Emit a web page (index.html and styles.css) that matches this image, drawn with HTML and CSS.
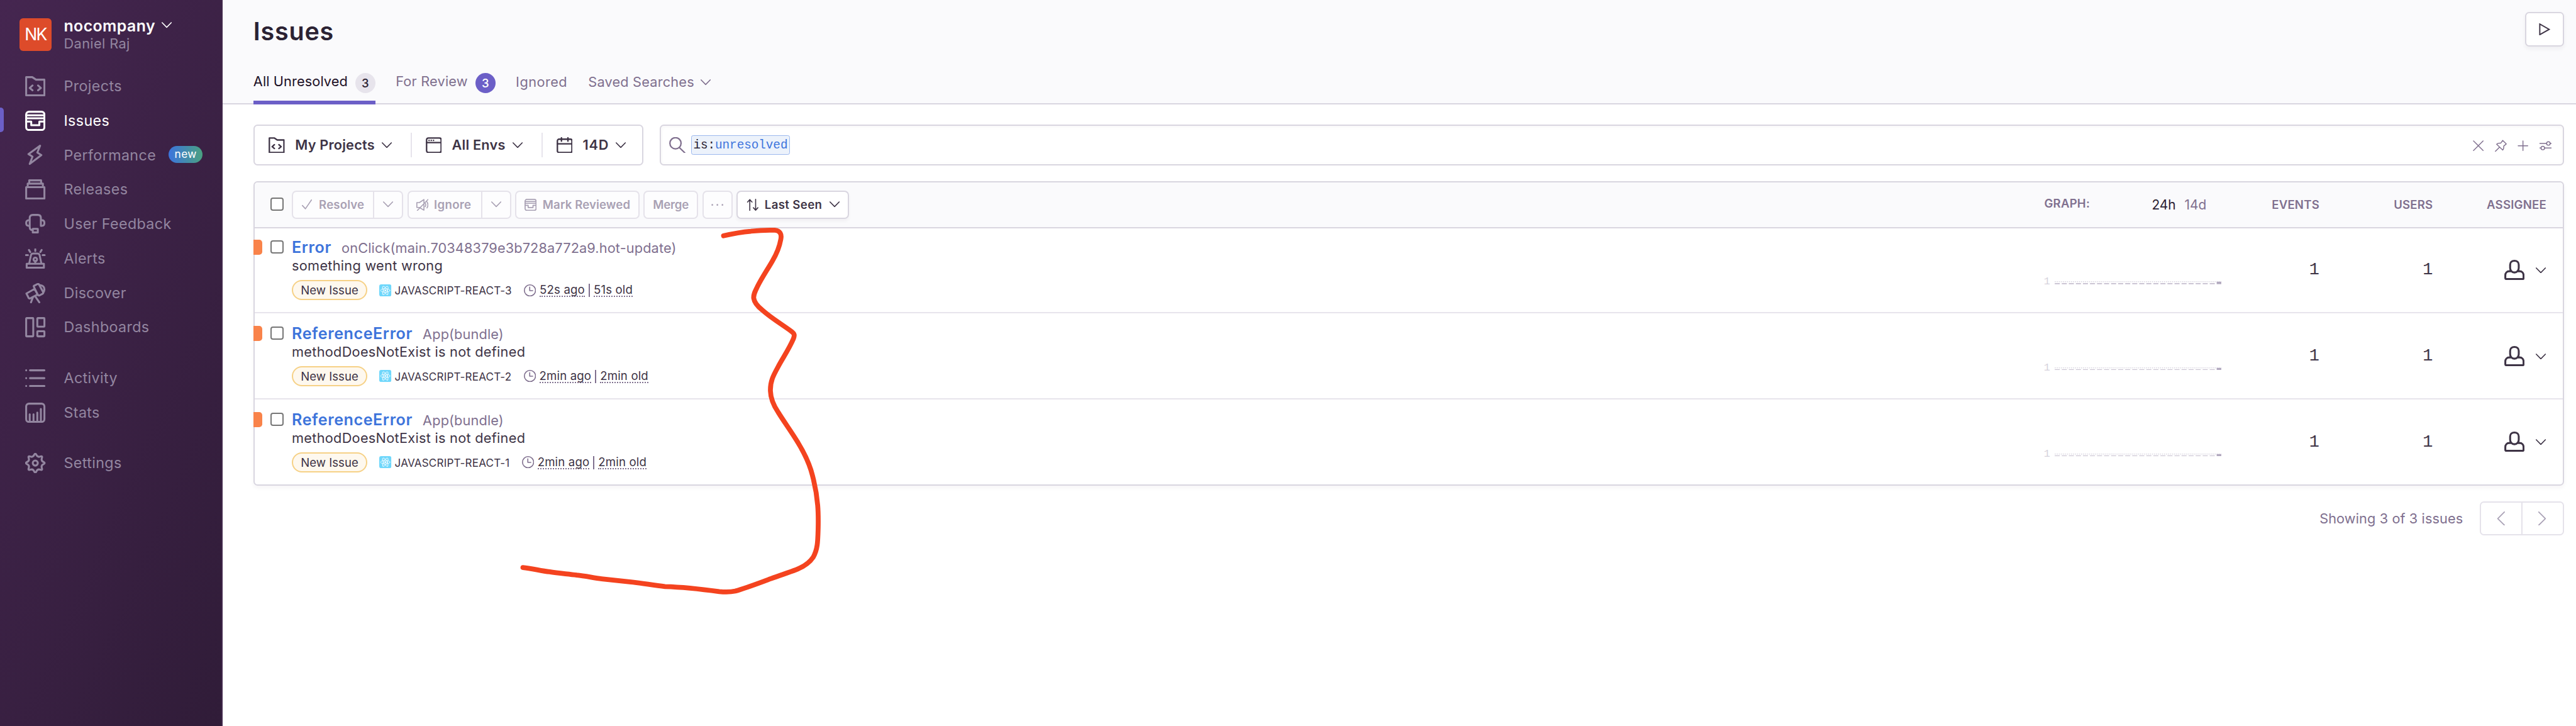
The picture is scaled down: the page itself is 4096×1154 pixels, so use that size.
FILE: index.html
```
<!DOCTYPE html>
<html lang="en">
<head>
<meta charset="utf-8">
<title>Issues - nocompany</title>
<link rel="stylesheet" href="styles.css">
</head>
<body>
<svg class="defs" aria-hidden="true">
  <symbol id="chevron" viewBox="0 0 20 12"><path d="M1 1.2 10 10.4 19 1.2"/></symbol>
  <symbol id="inbox" viewBox="0 0 40 40"><rect x="2" y="2" width="36" height="36" rx="5.5"/><path d="M2 9H38M2 15H38M2 21.5H12V28.5H28V21.5H38"/></symbol>
  <symbol id="folder" viewBox="0 0 40 40"><path d="M2 2H14L21.5 7H38V38H2ZM14.5 18.5 9 23.5 14.5 28M25.5 18.5 31 23.5 25.5 28"/></symbol>
  <symbol id="react" viewBox="0 0 24 24"><rect class="react-bg" width="24" height="24" rx="4"/><g class="react-ring"><ellipse cx="12" cy="12" rx="9.3" ry="3.6"/><ellipse cx="12" cy="12" rx="9.3" ry="3.6" transform="rotate(60 12 12)"/><ellipse cx="12" cy="12" rx="9.3" ry="3.6" transform="rotate(120 12 12)"/></g><circle class="react-dot" cx="12" cy="12" r="1.7"/></symbol>
  <symbol id="clock" viewBox="0 0 24 24"><circle cx="12" cy="12" r="11"/><path d="M11.5 5.5V12.5H17.5"/></symbol>
  <symbol id="user" viewBox="0 0 40 40"><path d="M11.5 9.5C11.500 5 15 1.900 20 1.900S28.500 5 28.500 9.500V16C28.500 21 25 25 20 25S11.500 21 11.500 16ZM13 22.500H10C5 22.500 2 26 2 30.500V36Q2 38 4 38H36Q38 38 38 36V30.500C38 26 35 22.500 30 22.500H27"/></symbol>
  <symbol id="spark" viewBox="0 0 330 6"><path class="spark-top" d="M0 1H330" stroke-dasharray="2 2"/><path class="spark-bars" d="M0 5H320" stroke-dasharray="10 3.92"/><rect class="spark-last" x="320" y="1" width="10" height="5"/></symbol>
</svg>
<div class="app">
  <aside class="sidebar">
    <div class="org">
      <div class="avatar">NK</div>
      <div class="org-text">
        <div class="org-name">nocompany <svg class="chev"><use href="#chevron"/></svg></div>
        <div class="org-user">Daniel Raj</div>
      </div>
    </div>
    <nav>
      <ul class="nav-group">
        <li><svg viewBox="0 0 40 40"><use href="#folder"/></svg>Projects</li>
        <li class="active"><svg viewBox="0 0 40 40"><use href="#inbox"/></svg>Issues</li>
        <li><svg viewBox="0 0 40 40"><path d="M29.500 2 6.500 18.500 14.500 23.500 9 38 32 20.500 24 15.500Z"/></svg>Performance<span class="new">new</span></li>
        <li><svg viewBox="0 0 40 40"><path d="M2 15.500H38V38H2ZM5 15.500V8.500H35V15.500M8 8.500V2H31.500V8.500"/></svg>Releases</li>
        <li><svg viewBox="0 0 40 40"><path d="M9 23.500V8Q9 2 15 2H25Q31 2 31 8V23.500M9 12.500H7Q2 12.500 2 18T7 23.500H9V26Q9 32 15 32M31 12.500H33Q38 12.500 38 18T33 23.500H31M15 29.500H25V36.500H15Z"/></svg>User Feedback</li>
        <li><svg viewBox="0 0 40 40"><path d="M7.500 3 10 7M20 1.500V5M32.500 3 30 7M1.500 13H5.500M34.500 13H38.500M8 29.500 11.500 13Q12.500 10 16 10H24Q27.500 10 28.500 13L32 29.500M3 30H37V38H3ZM20 25V30"/><circle cx="20" cy="21.500" r="3.500"/></svg>Alerts</li>
        <li><svg viewBox="0 0 40 40"><path d="M2.500 20.500 18.500 11.500 24.500 22.500 9 30.500 7 29.500ZM17 7Q16.500 5.500 18 5L25 1.500Q27 1.500 27.500 3L36 18.500Q36 20 34.500 21L28 24.500Q26 25 25 23ZM30 4Q38 5 38 13 37.500 17 35.500 19M29 6 35.500 17M15.500 27.500 11.500 38M19.500 25.500 28 38"/></svg>Discover</li>
        <li><svg viewBox="0 0 40 40"><rect x="2" y="2" width="14" height="36" rx="1"/><rect x="24" y="2" width="14" height="17" rx="1"/><rect x="24" y="28" width="14" height="10" rx="1"/></svg>Dashboards</li>
      </ul>
      <ul class="nav-group">
        <li><svg viewBox="0 0 40 40"><path d="M9.500 4.500H38M9.500 20H38M9.500 35.500H38M2 4.500H2.100M2 20H2.100M2 35.500H2.100"/></svg>Activity</li>
        <li><svg viewBox="0 0 40 40"><rect x="2" y="2" width="36" height="36" rx="5.500"/><path d="M9 36V23M16.500 36V23M24 36V19.500M31 36V12.500"/></svg>Stats</li>
      </ul>
      <ul class="nav-group">
        <li><svg viewBox="0 0 40 40"><path d="M36.050 17.700Q41 20 36.050 22.300 31.090 24.590 32.970 29.720 34.850 34.850 29.720 32.970 24.590 31.090 22.300 36.050 20 41 17.700 36.050 15.410 31.090 10.280 32.970 5.150 34.850 7.030 29.720 8.910 24.590 3.950 22.300-1 20 3.950 17.700 8.910 15.410 7.030 10.280 5.150 5.150 10.280 7.030 15.410 8.910 17.700 3.950 20-1 22.300 3.950 24.590 8.910 29.720 7.030 34.850 5.150 32.970 10.280 31.090 15.410 36.050 17.700Z"/><circle cx="20" cy="20" r="5"/></svg>Settings</li>
      </ul>
    </nav>
  </aside>

  <main class="main">
    <header class="page-head">
      <div class="title-row">
        <h1>Issues</h1>
        <button class="play"><svg viewBox="0 0 24 24"><path d="M3 1.500V22.500L21.500 12Z"/></svg></button>
      </div>
      <ul class="tabs">
        <li class="tab active"><span>All Unresolved</span><b class="count">3</b></li>
        <li class="tab"><span>For Review</span><b class="count review">3</b></li>
        <li class="tab"><span>Ignored</span></li>
        <li class="tab"><span>Saved Searches</span><svg class="chev"><use href="#chevron"/></svg></li>
      </ul>
    </header>

    <section class="content">
      <div class="filters">
        <div class="filter-box">
          <div class="filter projects"><svg class="ic32" viewBox="0 0 40 40"><use href="#folder"/></svg><span>My Projects</span><svg class="chev"><use href="#chevron"/></svg></div>
          <div class="filter envs"><svg class="ic32" viewBox="0 0 40 40"><rect x="2" y="2" width="36" height="36" rx="4.500"/><path d="M2 13.500H38M8 8H8.200M13.500 8H13.700M19 8H19.200"/></svg><span>All Envs</span><svg class="chev"><use href="#chevron"/></svg></div>
          <div class="filter"><svg class="ic32" viewBox="0 0 40 40"><rect x="2" y="5" width="36" height="33" rx="4"/><path d="M2 16.500H38M12 1.500V10M28 1.500V10"/></svg><span>14D</span><svg class="chev"><use href="#chevron"/></svg></div>
        </div>
        <div class="search">
          <svg class="ic32 glass" viewBox="0 0 32 32"><circle cx="12.500" cy="12" r="11"/><path d="M20 20.500 31 31"/></svg>
          <code class="token"><span>is:</span>unresolved</code>
          <div class="search-actions">
            <svg viewBox="0 0 24 24"><path d="M2.500 2.500 21.500 21.500M21.500 2.500 2.500 21.500"/></svg>
            <svg viewBox="0 0 24 24"><path d="M15.500 1.500 22.500 8.500 17.500 12.500Q18 18 15.500 20.500L3.500 9Q6 6.500 11.500 7ZM9.500 14.500 1 23"/></svg>
            <svg viewBox="0 0 24 24"><path d="M12 2.500V21.500M2.500 12H21.500"/></svg>
            <svg viewBox="0 0 24 24"><path d="M0 7.500H14M21 7.500H24M0 16.500H3M10 16.500H24"/><circle cx="17.500" cy="7.500" r="3.500"/><circle cx="6.500" cy="16.500" r="3.500"/></svg>
          </div>
        </div>
      </div>

      <div class="panel">
        <div class="panel-head">
          <div class="toolbar">
            <i class="check"></i>
            <div class="btn-group">
              <button class="btn resolve"><svg class="ic20" viewBox="0 0 20 20"><path d="M1 12 7 18.500 19 1"/></svg>Resolve</button>
              <button class="btn drop"><svg class="chev"><use href="#chevron"/></svg></button>
            </div>
            <div class="btn-group second">
              <button class="btn ignore"><svg class="ic24" viewBox="0 0 24 24"><path d="M1 7.500H6L15 1.500V22.500L6 17H1ZM2 23 23 1.500M17.500 8.500Q19.500 12 17.500 15.500M21 6Q25 12 21 18"/></svg>Ignore</button>
              <button class="btn drop"><svg class="chev"><use href="#chevron"/></svg></button>
            </div>
            <button class="btn solo reviewed"><svg class="ic24" viewBox="0 0 40 40"><use href="#inbox"/></svg>Mark Reviewed</button>
            <button class="btn solo merge">Merge</button>
            <button class="btn solo more"><svg class="ic24" viewBox="0 0 24 24"><circle cx="2" cy="12" r="1.700"/><circle cx="12" cy="12" r="1.700"/><circle cx="22" cy="12" r="1.700"/></svg></button>
            <button class="btn solo sort"><svg class="ic24" viewBox="0 0 24 24"><path d="M6.500 23V2M2 6.500 6.500 1.500 11 6.500M18 1V22M13.500 17.500 18 22.500 22.500 17.500"/></svg>Last Seen<svg class="chev"><use href="#chevron"/></svg></button>
          </div>
          <div class="graph-head"><b>Graph:</b><span class="on">24h</span><span>14d</span></div>
          <b class="col">Events</b>
          <b class="col">Users</b>
          <b class="col last">Assignee</b>
        </div>

        <article class="row">
          <div class="issue">
            <i class="level"></i><i class="check"></i>
            <div class="issue-body">
              <div class="issue-title"><a>Error</a><span>onClick(main.70348379e3b728a772a9.hot-update)</span></div>
              <div class="issue-msg">something went wrong</div>
              <div class="meta"><span class="pill">New Issue</span><svg class="ic24"><use href="#react"/></svg><span class="short">JAVASCRIPT-REACT-3</span><svg class="ic24 clock"><use href="#clock"/></svg><span class="time">52s ago</span><i class="bar"></i><span class="time">51s old</span></div>
            </div>
          </div>
          <div class="graph"><span>1</span><svg><use href="#spark"/></svg></div>
          <div class="num">1</div>
          <div class="num">1</div>
          <div class="assignee"><svg class="ic40"><use href="#user"/></svg><svg class="chev"><use href="#chevron"/></svg></div>
        </article>

        <article class="row">
          <div class="issue">
            <i class="level"></i><i class="check"></i>
            <div class="issue-body">
              <div class="issue-title"><a>ReferenceError</a><span>App(bundle)</span></div>
              <div class="issue-msg">methodDoesNotExist is not defined</div>
              <div class="meta"><span class="pill">New Issue</span><svg class="ic24"><use href="#react"/></svg><span class="short">JAVASCRIPT-REACT-2</span><svg class="ic24 clock"><use href="#clock"/></svg><span class="time">2min ago</span><i class="bar"></i><span class="time">2min old</span></div>
            </div>
          </div>
          <div class="graph"><span>1</span><svg><use href="#spark"/></svg></div>
          <div class="num">1</div>
          <div class="num">1</div>
          <div class="assignee"><svg class="ic40"><use href="#user"/></svg><svg class="chev"><use href="#chevron"/></svg></div>
        </article>

        <article class="row">
          <div class="issue">
            <i class="level"></i><i class="check"></i>
            <div class="issue-body">
              <div class="issue-title"><a>ReferenceError</a><span>App(bundle)</span></div>
              <div class="issue-msg">methodDoesNotExist is not defined</div>
              <div class="meta"><span class="pill">New Issue</span><svg class="ic24"><use href="#react"/></svg><span class="short">JAVASCRIPT-REACT-1</span><svg class="ic24 clock"><use href="#clock"/></svg><span class="time">2min ago</span><i class="bar"></i><span class="time">2min old</span></div>
            </div>
          </div>
          <div class="graph"><span>1</span><svg><use href="#spark"/></svg></div>
          <div class="num">1</div>
          <div class="num">1</div>
          <div class="assignee"><svg class="ic40"><use href="#user"/></svg><svg class="chev"><use href="#chevron"/></svg></div>
        </article>
      </div>

      <div class="pagination">
        <span>Showing 3 of 3 issues</span>
        <div class="pager">
          <button><svg viewBox="0 0 16 28"><path d="M15 1 2 14 15 27"/></svg></button>
          <button><svg viewBox="0 0 16 28"><path d="M1 1 14 14 1 27"/></svg></button>
        </div>
      </div>
    </section>
  </main>
</div>
<svg class="annotation" viewBox="0 0 5084 1432"><path d="M1428 465C1445 461 1464 457.500 1482 456 1500 454 1515 453.500 1529 454 1540 455 1543 462 1541 472 1538 489 1532 502 1524.500 514.500 1515 531 1503 549 1495.500 564 1490 575 1487 580 1487.500 588 1489 598 1496 605 1504.500 611.500 1523 628 1545 641 1562.500 654 1569 659 1568 662 1566 668 1557 689 1545 706 1535.700 723.400 1526 741 1520 752 1520.500 771 1521 788 1527 800 1535.700 813 1548 833 1563 853 1576 875 1587 893 1595 910 1600.400 927 1607 949 1612 975 1613.800 997 1615 1011 1615 1027 1614.700 1042 1614 1067 1614 1083 1605 1099 1597 1111 1586 1118 1571 1124 1555 1130 1539 1135 1522 1141.300 1498 1150 1475 1159 1451 1166 1440 1168.500 1431 1168 1419.600 1167 1384 1162 1348 1158 1312.500 1157 1290 1155 1268 1150 1245.500 1148 1226 1146 1207 1144 1187.500 1142 1171 1140 1155 1136 1138.400 1134.500 1120 1132 1102 1131 1084.800 1128 1067 1126 1049 1121 1032 1119.500"/></svg>
</body>
</html>
```
FILE: styles.css
```
/* 1rem = 1/508.4 of the window width; all lengths scale from it */
html { font-size: calc(100vw / 508.4); }
* { box-sizing: border-box; }
body {
  margin: 0;
  width: 100vw;
  height: 100vh;
  overflow: hidden;
  position: relative;
  background: #fff;
  color: #3e3446;
  font-family: Inter, "Liberation Sans", sans-serif;
  font-size: 2.7rem;
  letter-spacing: 0.01em;
  line-height: 1.2;
}
h1, ul { margin: 0; padding: 0; list-style: none; }
button { font: inherit; letter-spacing: inherit; color: inherit; margin: 0; padding: 0; background: none; border: 0; }
svg { display: block; flex: none; fill: none; stroke: currentColor; stroke-linecap: round; stroke-linejoin: round; }
i { display: block; flex: none; }
.defs { position: absolute; width: 0; height: 0; }
.app { display: flex; height: 100%; }

.chev { width: 2rem; height: 1.2rem; stroke-width: 2; }
.ic20 { width: 2rem; height: 2rem; stroke-width: 2; }
.ic24 { width: 2.4rem; height: 2.4rem; stroke-width: 2; }
.ic32 { width: 3.2rem; height: 3.2rem; stroke-width: 3.6; }
.ic40 { width: 4rem; height: 4rem; stroke-width: 3.8; }

/* Sidebar */
.sidebar {
  flex: none;
  width: 44rem;
  padding-top: 3.6rem;
  background: linear-gradient(294.17deg, #301c38 0%, #452650 100%);
  border-right: 2px solid #41284b;
  color: #9386a0;
}
.org { display: flex; height: 9.6rem; padding-left: 3.8rem; }
.avatar {
  width: 6.4rem; height: 6.4rem; margin-right: 2.4rem; border-radius: 0.7rem;
  background: #dd4b2a; color: #fff;
  display: flex; align-items: center; justify-content: center;
  font-size: 3.3rem; letter-spacing: -0.07em;
}
.org-name { display: flex; align-items: center; height: 3.2rem; color: #fff; font-size: 3.08rem; font-weight: 600; letter-spacing: 0.018em; }
.org-name .chev { margin: -0.4rem 0 0 1.3rem; }
.org-user { height: 3.6rem; line-height: 3.6rem; letter-spacing: 0.017em; }
.nav-group { margin-bottom: 3.2rem; }
.nav-group:first-child { margin-top: 0.4rem; }
.nav-group li { display: flex; align-items: center; height: 6.8rem; padding-left: 5rem; font-size: 2.89rem; letter-spacing: 0.016em; }
.nav-group li svg { width: 4rem; height: 4rem; margin-right: 3.6rem; stroke-width: 3.8; }
.nav-group li.active { color: #fff; padding-left: 0; }
.active::before { content: ""; width: 0.8rem; height: 4.8rem; margin: -0.3rem 4.2rem 0 0; border-radius: 0 0.6rem 0.6rem 0; background: #6c5fc7; }
.tab.active::before { content: none; }
.new {
  margin: -0.3rem 0 0 2.5rem; width: 6.7rem; height: 3.4rem; border-radius: 1.7rem;
  background: linear-gradient(90deg, #3c74dd, #4aa181); color: #fff;
  display: flex; align-items: center; justify-content: center; font-size: 2.15rem;
}

/* Page header */
.main { flex: 1; min-width: 0; }
.page-head {
  display: flex; flex-direction: column; justify-content: space-between;
  height: 20.6rem; padding: 2.4rem 2.4rem 0 6rem;
  background: #fafafc; border-bottom: 2px solid #d9d6e0;
}
.title-row { display: flex; justify-content: space-between; }
h1 { height: 7.8rem; line-height: 7.9rem; color: #2b2233; font-size: 4.9rem; font-weight: 600; letter-spacing: 0.02em; }
.play {
  width: 7.6rem; height: 6.8rem; background: #fff; border: 2px solid #d9d6e0; border-radius: 0.8rem;
  box-shadow: 0 0.4rem 0.8rem rgba(43, 34, 51, 0.05);
  display: flex; align-items: center; justify-content: center;
}
.play svg { width: 2.4rem; height: 2.4rem; stroke-width: 2.4; stroke-linejoin: miter; }
.tabs { display: flex; gap: 4rem; margin-bottom: -2px; color: #80708f; }
.tab { display: flex; align-items: flex-start; height: 6.2rem; line-height: 3.4rem; letter-spacing: 0.008em; }
.tab.active { width: 24.1rem; justify-content: space-between; color: #1d1127; border-bottom: 0.8rem solid #6c5fc7; letter-spacing: 0.004em; }
.tab:nth-child(n+3) { padding-top: 0.1rem; }
.tab:nth-child(3) { width: 10.3rem; letter-spacing: 0.02em; }
.tab:nth-child(2) { width: 19.7rem; justify-content: space-between; }
.count {
  width: 4rem; height: 4rem; border-radius: 50%;
  background: #e7e4ec; color: #2b2233; text-align: center; line-height: 4rem; font-size: 2.3rem; font-weight: 500; letter-spacing: 0;
}
.count.review { background: #6c5fc7; color: #fff; }
.tab .chev { margin: 1.2rem 0 0 1.2rem; }

/* Filters and search */
.content { padding: 4rem 2.4rem 0 6rem; }
.filters { display: flex; gap: 3.2rem; height: 8rem; }
.filter-box { display: flex; align-items: center; width: 77rem; border: 2px solid #d9d6e0; border-radius: 0.8rem; }
.filter { display: flex; align-items: center; height: 4.8rem; padding-left: 2.8rem; font-weight: 600; letter-spacing: 0.008em; white-space: nowrap; }
.filter.projects { width: 30.8rem; }
.filter.envs { width: 25.8rem; }
.filter + .filter { border-left: 2px solid #e7e4ec; padding-left: 2.7rem; }
.filter span { margin: 0 1.4rem 0 2rem; }
.filter:last-child span { letter-spacing: 0.035em; }
.search {
  flex: 1; display: flex; align-items: center; padding: 0 2.2rem 0 1.6rem;
  border: 2px solid #d9d6e0; border-radius: 0.8rem; box-shadow: inset 0 0.2rem 0.8rem rgba(43, 34, 51, 0.04);
  color: #80708f;
}
.glass { stroke-width: 2.8; }
.token {
  margin-left: 1.2rem; width: 19.4rem; height: 3.8rem; border: 1px solid #9db9ee; border-radius: 0.4rem; background: #ecf2fb;
  color: #3c74dd; font: 2.4rem/3.8rem "Liberation Mono", monospace; letter-spacing: -0.003em; text-align: center; white-space: nowrap;
}
.token span { color: #2b2233; }
.search-actions { display: flex; gap: 2rem; margin: 0.2rem 0 0 auto; }
.search-actions svg { width: 2.4rem; height: 2.4rem; stroke-width: 1.8; }

/* Issue table */
.panel { margin-top: 3.2rem; border: 2px solid #d9d6e0; border-radius: 0.8rem; box-shadow: 0 0.4rem 0.8rem rgba(43, 34, 51, 0.04); }
.panel-head, .row { display: grid; grid-template-columns: 1fr 36rem 18.3rem 22.4rem 25.6rem; }
.panel-head {
  height: 9rem; align-items: center; padding-bottom: 0.1rem;
  background: #fafafc; border-bottom: 2px solid #d9d6e0; border-radius: 0.7rem 0.7rem 0 0;
  color: #80708f; font-size: 2.31rem;
}
.toolbar { display: flex; align-items: center; padding-left: 3.15rem; color: #a9a1b4; font-weight: 600; }
.check { width: 2.6rem; height: 2.6rem; border: 2px solid #767676; border-radius: 0.5rem; background: #fff; }
.toolbar .check { margin: -0.2rem 1.6rem 0 0; }
.btn-group { display: flex; width: 22rem; height: 5.6rem; margin-right: 0.8rem; border: 2px solid #e5e2ea; border-radius: 0.9rem; background: #fdfdfe; }
.btn-group.second { width: 20.5rem; }
.btn { display: flex; align-items: center; white-space: nowrap; }
.btn.resolve { flex: 1; padding-left: 1.75rem; gap: 1.35rem; letter-spacing: 0.008em; }
.btn.ignore { flex: 1; padding-left: 1.5rem; gap: 1.1rem; letter-spacing: 0.018em; }
.btn.drop { justify-content: center; width: 5.75rem; border-left: 2px solid #e5e2ea; }
.btn.solo { height: 5.6rem; margin-right: 0.8rem; border: 2px solid #e5e2ea; border-radius: 0.9rem; background: #fdfdfe; justify-content: center; }
.btn.reviewed { width: 24.5rem; gap: 1.2rem; letter-spacing: 0.006em; }
.reviewed svg { stroke-width: 3.6; }
.btn.merge { width: 10.8rem; letter-spacing: -0.012em; }
.btn.more { width: 6rem; }
.more svg { fill: currentColor; stroke: none; }
.btn.sort { width: 22.2rem; margin: 0; letter-spacing: 0.02em; color: #3e3446; background: #fff; border-color: #d9d6e0; box-shadow: 0 0.4rem 0.6rem rgba(43, 34, 51, 0.04); }
.sort .ic24 { margin-right: 1.2rem; }
.sort .chev { margin-left: 1.4rem; }
.panel-head b { text-transform: uppercase; font-weight: 600; letter-spacing: 0.01em; }
.graph-head { display: flex; align-items: center; gap: 1.7rem; padding-right: 4rem; font-size: 2.6rem; letter-spacing: 0; }
.graph-head b { margin: -0.4rem auto 0 0; font-size: 2.31rem; }
.on { color: #2b2233; }
.col { text-align: right; }
.col.last { padding-right: 3.2rem; }

.row { height: 16.8rem; align-items: center; border-bottom: 2px solid #e7e4ec; }
.row + .row { height: 17rem; padding-top: 0.2rem; }
.row:last-child { height: 16.7rem; border-bottom: 0; }
.issue { display: flex; align-self: start; }
.level { width: 1.8rem; height: 3rem; margin: 2.2rem 1.6rem 0 -0.25rem; border-radius: 0 0.6rem 0.6rem 0; background: #f9834a; }
.issue .check { margin: 2.4rem 1.6rem 0 0; }
.issue-body { padding-top: 1.9rem; }
.issue-title { display: flex; align-items: baseline; gap: 2rem; height: 3.8rem; line-height: 3.8rem; color: #80708f; letter-spacing: 0.005em; }
.issue-title a { color: #3d74db; font-size: 3.12rem; font-weight: 600; letter-spacing: 0.022em; }
.issue-msg { height: 3.4rem; line-height: 3.4rem; letter-spacing: 0.012em; }
.meta { display: flex; align-items: center; margin-top: 1.1rem; height: 4rem; font-size: 2.31rem; letter-spacing: 0.008em; }
.pill {
  width: 14.9rem; height: 4rem; margin-right: 2.4rem; border: 2px solid #f6d186; border-radius: 2rem; background: #fef8ee;
  display: flex; align-items: center; justify-content: center; letter-spacing: 0;
}
.react-bg { fill: #6fd7fb; stroke: none; }
.react-ring { stroke: #fff; stroke-width: 1; }
.react-dot { fill: #fff; stroke: none; }
.short { margin: 0.2rem 2.4rem 0 0.6rem; font-size: 2.12rem; letter-spacing: 0.011em; }
.clock { color: #80708f; margin-right: 0.7rem; }
.time { height: 2.7rem; line-height: 2.7rem; border-bottom: 2px dotted #80708f; }
.bar { width: 2px; height: 2.6rem; margin: 0 0.75rem; background: #80708f; }
.graph { display: flex; align-self: start; align-items: flex-start; margin-top: 9.8rem; height: 1.4rem; }
.graph span { width: 2.1rem; margin-left: -0.1rem; color: #d5d2dc; font: 2.1rem/1.4rem "Liberation Mono", monospace; }
.graph svg { width: 33rem; height: 0.6rem; margin-top: 0.6rem; stroke-linecap: butt; stroke-width: 2; }
.spark-top { stroke: #d9d6e0; }
.spark-bars { stroke: #b2a9bf; }
.spark-last { fill: #b2a9bf; stroke: none; }
.num { text-align: right; font: 3.35rem/1 "Liberation Mono", monospace; letter-spacing: 0; }
.assignee { display: flex; align-items: center; justify-content: flex-end; gap: 2.2rem; padding-right: 3.3rem; }
.assignee .ic40 { margin-top: -0.2rem; }

/* Pagination */
.pagination { display: flex; align-items: center; justify-content: flex-end; gap: 3.3rem; margin-top: 3.1rem; color: #80708f; letter-spacing: 0.004em; }
.pager { display: flex; width: 16.6rem; height: 6.8rem; border: 2px solid #e5e2ea; border-radius: 0.8rem; color: #aaa2b6; }
.pager button { flex: 1; display: flex; align-items: center; justify-content: center; }
.pager button + button { border-left: 2px solid #e5e2ea; }
.pager svg { width: 1.6rem; height: 2.8rem; stroke-width: 2.2; }

/* Freehand marker drawn over the page */
.annotation { position: absolute; inset: 0; width: 100%; height: 100%; stroke: #f4431f; stroke-width: 9.6; pointer-events: none; }
```
